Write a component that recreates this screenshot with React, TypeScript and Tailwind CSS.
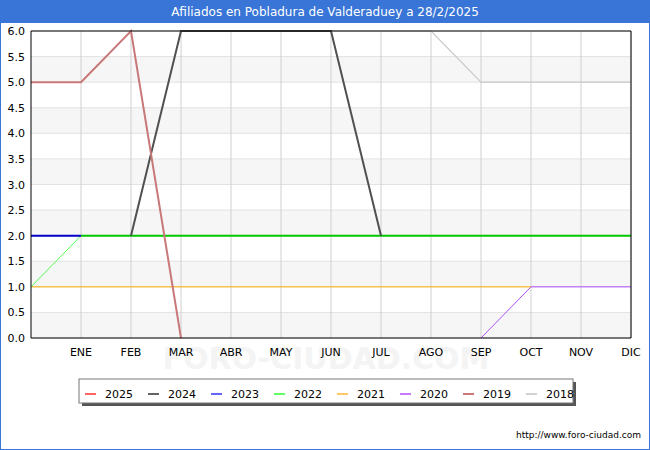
export default function App() {
  const X = (m: number) => 30 + m * 50;
  const Y = (v: number) => 337 - v * (307 / 6);
  const pts = (a: [number, number][]) => a.map(([m, v]) => `${X(m)},${Y(v)}`).join(" ");
  const months = ["ENE","FEB","MAR","ABR","MAY","JUN","JUL","AGO","SEP","OCT","NOV","DIC"];
  const legend: [string, string][] = [["2025","#ff6464"],["2024","#646464"],["2023","#6464ff"],["2022","#64ff64"],["2021","#ffc864"],["2020","#c878ff"],["2019","#c87878"],["2018","#d2d2d2"]];
  return (
    <div className="w-[650px] h-[450px] bg-white border border-[#3875d7] relative overflow-hidden" style={{ fontFamily: '"DejaVu Sans", sans-serif' }}>
      <div className="h-[22px] bg-[#3875d7] text-white text-[12px] flex items-center justify-center">Afiliados en Pobladura de Valderaduey a 28/2/2025</div>
      <svg width="650" height="428" viewBox="0 22 650 428" className="block">
        {[0,1,2,3,4,5].map(i => <rect key={i} x={30} y={Y(i+0.5)} width={600} height={307/12} fill="#f6f6f6" />)}
        {Array.from({length:13}).map((_,i)=><line key={"h"+i} x1={30} x2={630} y1={Y(i*0.5)} y2={Y(i*0.5)} stroke="#e2e2e2" />)}
        {Array.from({length:12}).map((_,i)=><line key={"v"+i} x1={X(i+1)} x2={X(i+1)} y1={30} y2={337} stroke="#d0d0d0" />)}
        <text x={325} y={368} fontSize="30" fill="#f4f4f4" textAnchor="middle" fontWeight="bold">FORO-CIUDAD.COM</text>
        <polyline fill="none" stroke="#c8c8c8" strokeWidth="1.2" points={pts([[3,6],[8,6],[9,5],[12,5]])} />
        <polyline fill="none" stroke="#ffb000" strokeWidth="1" points={pts([[0,1],[10,1]])} />
        <polyline fill="none" stroke="#b050ff" strokeWidth="1" points={pts([[9,0],[10,1],[12,1]])} />
        <polyline fill="none" stroke="#50ff50" strokeWidth="1" points={pts([[0,1],[1,2]])} />
        <polyline fill="none" stroke="#00c800" strokeWidth="2" points={pts([[1,2],[12,2]])} />
        <polyline fill="none" stroke="#0000c8" strokeWidth="2" points={pts([[0,2],[1,2]])} />
        <polyline fill="none" stroke="#505050" strokeWidth="2" points={pts([[2,2],[3,6],[6,6],[7,2]])} />
        <polyline fill="none" stroke="#c87878" strokeWidth="2" points={pts([[0,5],[1,5],[2,6],[3,0]])} />
        <polyline fill="none" stroke="#000" strokeWidth="1" points="30,337 30,30 630,30 630,337 30,337" />
        {Array.from({length:13}).map((_,i)=><text key={"y"+i} x={24} y={Y(i*0.5)+4} fontSize="11" textAnchor="end" fill="#000">{(i*0.5).toFixed(1)}</text>)}
        {months.map((m,i)=><text key={m} x={X(i+1)} y={355} fontSize="11" textAnchor="middle" fill="#000">{m}</text>)}
        <rect x={81} y={381} width={494} height={24} fill="#555" />
        <rect x={78} y={378} width={494} height={24} fill="#fff" stroke="#777" />
        {legend.map(([l,c],i)=>(
          <g key={l}>
            <line x1={84+i*63} x2={95+i*63} y1={393} y2={393} stroke={c} strokeWidth="2" />
            <text x={104+i*63} y={397} fontSize="11" fill="#000">{l}</text>
          </g>
        ))}
        <text x={640} y={437} fontSize="9" textAnchor="end" fill="#000">http://www.foro-ciudad.com</text>
      </svg>
    </div>
  );
}
